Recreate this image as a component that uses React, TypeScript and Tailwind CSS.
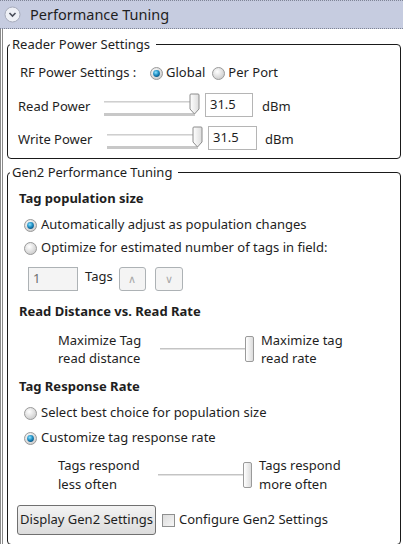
import React from 'react';

// Performance Tuning panel - WPF style
const font = { fontFamily: '"Noto Sans", "Open Sans", Arial, sans-serif' };

function Radio({ checked }: { checked?: boolean }) {
  return (
    <svg width="13" height="13" viewBox="0 0 13 13" className="shrink-0">
      <defs>
        <radialGradient id="rOff" cx="40%" cy="35%" r="70%">
          <stop offset="0%" stopColor="#ffffff" />
          <stop offset="100%" stopColor="#c9c9c9" />
        </radialGradient>
        <radialGradient id="rOn" cx="40%" cy="35%" r="65%">
          <stop offset="0%" stopColor="#8fe3ff" />
          <stop offset="60%" stopColor="#1f8fc4" />
          <stop offset="100%" stopColor="#0a5a8a" />
        </radialGradient>
      </defs>
      <circle cx="6.5" cy="6.5" r="6" fill="url(#rOff)" stroke="#9a9a9a" strokeWidth="1" />
      {checked && <circle cx="6.5" cy="6.5" r="3.4" fill="url(#rOn)" />}
    </svg>
  );
}

function PowerSlider() {
  return (
    <div className="relative w-[97px] h-[24px] shrink-0">
      <div className="absolute left-0 right-[6px] top-[8px] h-[2px] bg-[#e4e4e4] border-t border-[#cfcfcf]" />
      <div className="absolute left-0 right-[6px] top-[20px] h-[3px] bg-[#c8c8c8]" />
      <svg width="11" height="22" viewBox="0 0 11 22" className="absolute right-[1px] top-0">
        <defs>
          <linearGradient id="thumbP" x1="0" x2="1">
            <stop offset="0%" stopColor="#ffffff" />
            <stop offset="100%" stopColor="#dcdcdc" />
          </linearGradient>
        </defs>
        <path d="M1 2 Q1 1 2 1 L9 1 Q10 1 10 2 L10 16 L5.5 21 L1 16 Z" fill="url(#thumbP)" stroke="#8c8c8c" strokeWidth="1" />
      </svg>
    </div>
  );
}

function FlatSlider() {
  return (
    <div className="relative w-[94px] h-[26px] shrink-0">
      <div className="absolute left-0 right-[4px] top-[12px] h-[2px] bg-[#e2e2e2] border-t border-[#c4c4c4]" />
      <div className="absolute right-0 top-0 w-[9px] h-[26px] rounded-[2px] border border-[#9a9a9a] bg-gradient-to-r from-white to-[#dcdcdc]" />
    </div>
  );
}

function GroupBox({ title, children, className }: { title: string; children: React.ReactNode; className?: string }) {
  return (
    <fieldset className={`border border-[#1a1a1a] rounded-[4px] ${className ?? ''}`}>
      <legend className="ml-[2px] pl-[2px] pr-[6px] text-[13px] leading-[16px] text-[#1e1e1e]">{title}</legend>
      {children}
    </fieldset>
  );
}

function TextBox({ value, className }: { value: string; className?: string }) {
  return (
    <div className={`h-[24px] border border-[#b5b5b5] bg-white px-[4px] flex items-center text-[13px] text-[#1e1e1e] ${className ?? ''}`}>
      {value}
    </div>
  );
}

export default function App() {
  return (
    <div className="w-[403px] h-[544px] bg-white overflow-hidden text-[#1e1e1e]" style={font}>
      {/* header */}
      <div className="h-[29px] bg-[#c6cce0] border-t border-b border-dotted border-[#7e8496] flex items-center">
        <svg width="17" height="17" viewBox="0 0 17 17" className="ml-[4px]">
          <circle cx="8.5" cy="8.5" r="7.5" fill="#eef0f6" stroke="#a6abbb" />
          <path d="M5.5 7 L8.5 10 L11.5 7" fill="none" stroke="#4a4e5a" strokeWidth="1.6" />
        </svg>
        <span className="ml-[9px] text-[14.5px]">Performance Tuning</span>
      </div>

      {/* body */}
      <div className="h-[515px] border-l-[3px] border-double border-[#8a8a8a] pl-[4px] pr-[2px] pt-[7px]">
        <GroupBox title="Reader Power Settings" className="pb-[8px]">
          <div className="h-[22px] mt-[10px] flex items-center text-[13px]">
            <span className="ml-[12px] w-[130px]">RF Power Settings :</span>
            <Radio checked />
            <span className="ml-[3px]">Global</span>
            <span className="ml-[7px]"><Radio /></span>
            <span className="ml-[3px]">Per Port</span>
          </div>
          <div className="h-[24px] mt-[9px] flex items-center text-[13px]">
            <span className="ml-[10px] w-[86px] pt-[3px]">Read Power</span>
            <PowerSlider />
            <TextBox value="31.5" className="ml-[4px] w-[48px]" />
            <span className="ml-[9px] pt-[3px]">dBm</span>
          </div>
          <div className="h-[24px] mt-[9px] flex items-center text-[13px]">
            <span className="ml-[10px] w-[89px] pt-[3px]">Write Power</span>
            <PowerSlider />
            <TextBox value="31.5" className="ml-[4px] w-[49px]" />
            <span className="ml-[8px] pt-[3px]">dBm</span>
          </div>
        </GroupBox>

        <GroupBox title="Gen2 Performance Tuning" className="mt-[5px] h-[381px]">
          <div className="pl-[11px] text-[13px]">
            <div className="h-[18px] mt-[10px] flex items-center font-bold">Tag population size</div>
            <div className="h-[18px] mt-[8px] flex items-center pl-[5px] gap-[4px]">
              <Radio checked />
              <span>Automatically adjust as population changes</span>
            </div>
            <div className="h-[18px] mt-[5px] flex items-center pl-[5px] gap-[4px]">
              <Radio />
              <span>Optimize for estimated number of tags in field:</span>
            </div>
            <div className="h-[24px] mt-[10px] flex items-center pl-[9px]">
              <div className="w-[50px] h-[24px] border border-[#adb2b5] bg-[#f4f4f4] px-[4px] flex items-center text-[#6d6d6d]">1</div>
              <span className="ml-[7px] -mt-[4px]">Tags</span>
              <div className="ml-[6px] w-[27px] h-[24px] border border-[#adb2b5] rounded-[3px] bg-[#f4f4f4] flex items-center justify-center text-[11px] text-[#a8a8a8]">∧</div>
              <div className="ml-[9px] w-[28px] h-[24px] border border-[#adb2b5] rounded-[3px] bg-[#f4f4f4] flex items-center justify-center text-[11px] text-[#a8a8a8]">∨</div>
            </div>
            <div className="h-[18px] mt-[12px] flex items-center font-bold">Read Distance vs. Read Rate</div>
            <div className="h-[38px] mt-[9px] flex items-center">
              <div className="ml-[39px] w-[102px] leading-[18px]">Maximize Tag<br />read distance</div>
              <FlatSlider />
              <div className="ml-[7px] leading-[18px]">Maximize tag<br />read rate</div>
            </div>
            <div className="h-[18px] mt-[10px] flex items-center font-bold">Tag Response Rate</div>
            <div className="h-[18px] mt-[8px] flex items-center pl-[5px] gap-[4px]">
              <Radio />
              <span>Select best choice for population size</span>
            </div>
            <div className="h-[18px] mt-[7px] flex items-center pl-[5px] gap-[4px]">
              <Radio checked />
              <span>Customize tag response rate</span>
            </div>
            <div className="h-[38px] mt-[9px] flex items-center">
              <div className="ml-[39px] w-[100px] leading-[19px]">Tags respond<br />less often</div>
              <FlatSlider />
              <div className="ml-[7px] leading-[19px]">Tags respond<br />more often</div>
            </div>
            <div className="h-[30px] mt-[11px] flex items-center -ml-[2px]">
              <div className="w-[139px] h-[30px] border border-[#707070] rounded-[3px] bg-gradient-to-b from-[#f3f3f3] to-[#dcdcdc] flex items-center justify-center whitespace-nowrap">
                Display Gen2 Settings
              </div>
              <div className="ml-[6px] w-[13px] h-[13px] border border-[#8e8f8f] bg-gradient-to-br from-[#dcdcdc] to-[#f6f6f6]" />
              <span className="ml-[4px]">Configure Gen2 Settings</span>
            </div>
          </div>
        </GroupBox>
      </div>
    </div>
  );
}
